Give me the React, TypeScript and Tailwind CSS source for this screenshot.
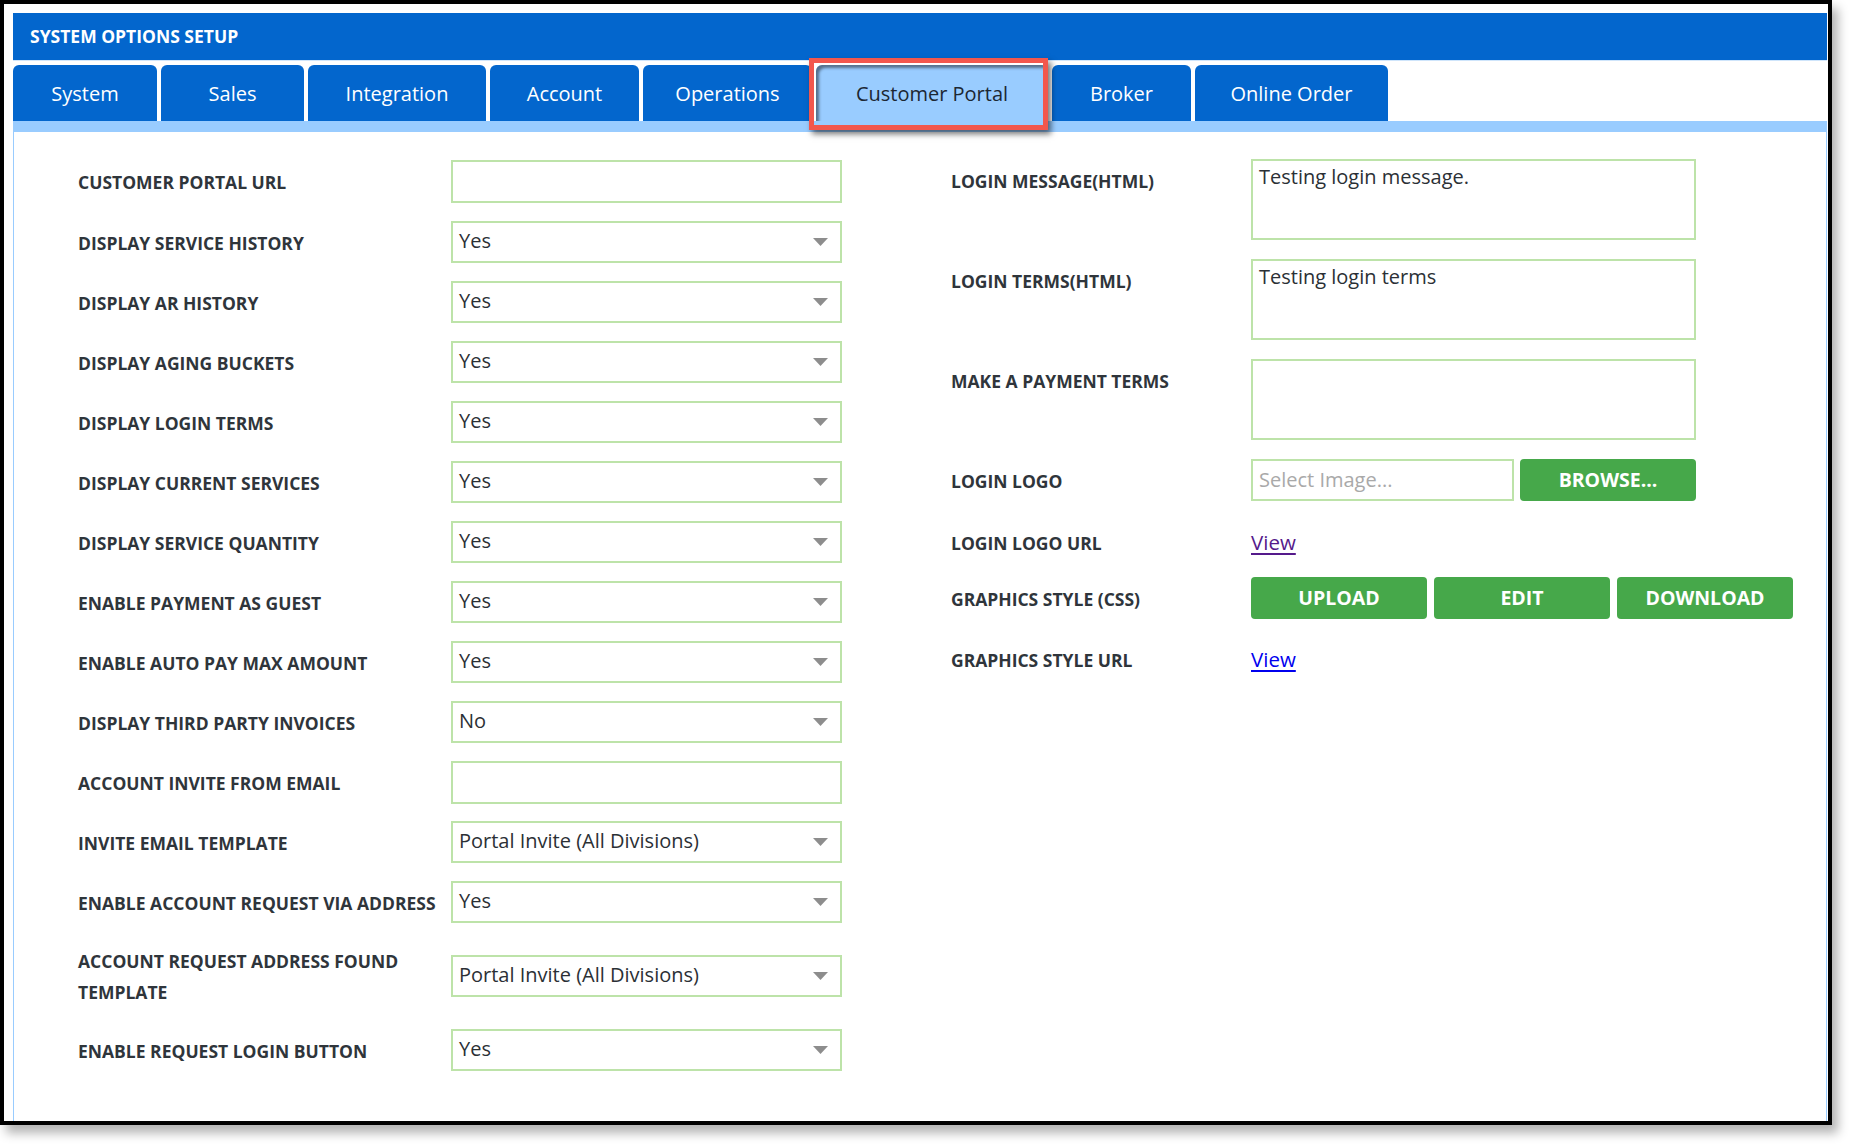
import React from "react";

const font = { fontFamily: '"Open Sans", "Noto Sans", Arial, sans-serif' };

type Row =
  | { label: React.ReactNode; kind: "input"; h?: number }
  | { label: React.ReactNode; kind: "select"; value: string; h?: number };

const rows: Row[] = [
  { label: "CUSTOMER PORTAL URL", kind: "input", h: 62 },
  { label: "DISPLAY SERVICE HISTORY", kind: "select", value: "Yes" },
  { label: "DISPLAY AR HISTORY", kind: "select", value: "Yes" },
  { label: "DISPLAY AGING BUCKETS", kind: "select", value: "Yes" },
  { label: "DISPLAY LOGIN TERMS", kind: "select", value: "Yes" },
  { label: "DISPLAY CURRENT SERVICES", kind: "select", value: "Yes" },
  { label: "DISPLAY SERVICE QUANTITY", kind: "select", value: "Yes" },
  { label: "ENABLE PAYMENT AS GUEST", kind: "select", value: "Yes" },
  { label: "ENABLE AUTO PAY MAX AMOUNT", kind: "select", value: "Yes" },
  { label: "DISPLAY THIRD PARTY INVOICES", kind: "select", value: "No" },
  { label: "ACCOUNT INVITE FROM EMAIL", kind: "input" },
  { label: "INVITE EMAIL TEMPLATE", kind: "select", value: "Portal Invite (All Divisions)" },
  { label: "ENABLE ACCOUNT REQUEST VIA ADDRESS", kind: "select", value: "Yes" },
  {
    label: (
      <>
        ACCOUNT REQUEST ADDRESS FOUND
        <br />
        TEMPLATE
      </>
    ),
    kind: "select",
    value: "Portal Invite (All Divisions)",
    h: 88,
  },
  { label: "ENABLE REQUEST LOGIN BUTTON", kind: "select", value: "Yes" },
];

function Arrow() {
  return (
    <svg width="15" height="8" viewBox="0 0 15 8" className="shrink-0">
      <polygon points="0,0 15,0 7.5,8" fill="#8d8d8d" />
    </svg>
  );
}

function Label({ children }: { children: React.ReactNode }) {
  return (
    <div className="w-[373px] shrink-0 whitespace-nowrap pt-[2px] text-[17.5px] font-bold leading-[31px] text-[#2f353b]">
      {children}
    </div>
  );
}

function GreenBtn({ children, w }: { children: React.ReactNode; w: string }) {
  return (
    <div
      className={`${w} flex h-[42px] items-center justify-center rounded-[4px] bg-[#46a84a] text-[19.5px] font-bold text-white`}
    >
      {children}
    </div>
  );
}

const tabs = [
  { name: "System", w: "w-[144px]" },
  { name: "Sales", w: "w-[143px]" },
  { name: "Integration", w: "w-[178px]" },
  { name: "Account", w: "w-[149px]" },
  { name: "Operations", w: "w-[169px]" },
  { name: "Customer Portal", w: "w-[232px]", active: true },
  { name: "Broker", w: "w-[139px]" },
  { name: "Online Order", w: "w-[193px]" },
];

const rightLabel = "w-[300px] shrink-0 whitespace-nowrap pt-[2px] text-[17.5px] font-bold text-[#2f353b]";

export default function App() {
  return (
    <div className="h-[1144px] w-[1850px] overflow-hidden bg-white" style={font}>
      <div className="h-[1125px] w-[1832px] border-4 border-black bg-white shadow-[6px_8px_10px_rgba(0,0,0,0.3)]">
        <div className="flex h-full flex-col pl-[9px] pr-[1px] pt-[9px]">
          {/* Header */}
          <div className="flex h-[47px] shrink-0 items-center bg-[#0366cd] pl-[17px] text-[17.5px] font-bold text-white">
            SYSTEM OPTIONS SETUP
          </div>
          <div className="h-[5px] shrink-0 border-t border-[#cfe5fb] bg-white" />
          {/* Tabs */}
          <div className="relative flex h-[56px] shrink-0 gap-[4px]">
            {tabs.map((t) =>
              t.active ? (
                <div
                  key={t.name}
                  className={`${t.w} relative flex items-center justify-center rounded-t-[6px] bg-[#99ccff] pt-[2px] text-[20px] text-[#1c2733] shadow-[inset_3px_3px_3px_rgba(0,0,0,0.45)]`}
                >
                  {t.name}
                  <div className="pointer-events-none absolute left-[-7px] top-[-7px] h-[72px] w-[239px] border-[5px] border-[#f2574d] shadow-[3px_4px_6px_rgba(0,0,0,0.55)]" />
                </div>
              ) : (
                <div
                  key={t.name}
                  className={`${t.w} flex items-center justify-center rounded-t-[6px] bg-[#0366cd] pt-[2px] text-[20px] text-white`}
                >
                  {t.name}
                </div>
              )
            )}
          </div>
          <div className="h-[11px] shrink-0 bg-[#99ccff]" />
          {/* Content */}
          <div className="flex flex-1 border-x border-[#99ccff] pl-[64px]">
            {/* Left column */}
            <div className="flex w-[764px] shrink-0 flex-col pt-[18px]">
              {rows.map((r, i) => (
                <div
                  key={i}
                  className={`flex items-center ${r.h === 62 ? "h-[62px]" : r.h === 88 ? "h-[88px]" : "h-[60px]"}`}
                >
                  <Label>{r.label}</Label>
                  {r.kind === "input" ? (
                    <div className="h-[43px] w-[391px] border-2 border-[#bde3a9] bg-white" />
                  ) : (
                    <div className="flex h-[42px] w-[391px] items-center justify-between border-2 border-[#bde3a9] bg-white pl-[6px] pr-[12px] text-[20px] text-[#2b3035]">
                      <span className="-mt-[2px]">{r.value}</span>
                      <Arrow />
                    </div>
                  )}
                </div>
              ))}
            </div>
            {/* Right column */}
            <div className="ml-[109px] flex flex-col pt-[27px]">
              {[
                { l: "LOGIN MESSAGE(HTML)", v: "Testing login message." },
                { l: "LOGIN TERMS(HTML)", v: "Testing login terms" },
                { l: "MAKE A PAYMENT TERMS", v: "" },
              ].map((r, i) => (
                <div key={i} className={`flex items-start ${i > 0 ? "mt-[19px]" : ""}`}>
                  <div className={`flex h-[42px] items-center ${rightLabel}`}>{r.l}</div>
                  <div className="h-[81px] w-[445px] border-2 border-[#bde3a9] bg-white pl-[6px] pt-[1px] text-[20px] leading-[30px] text-[#2b3035]">
                    {r.v}
                  </div>
                </div>
              ))}
              <div className="mt-[19px] flex items-center">
                <div className={`flex h-[42px] items-center ${rightLabel}`}>LOGIN LOGO</div>
                <div className="flex h-[42px] w-[263px] items-center border-2 border-[#bde3a9] bg-white pl-[6px] text-[20px] text-[#a9a9a9]">
                  Select Image...
                </div>
                <div className="ml-[6px]">
                  <GreenBtn w="w-[176px]">BROWSE...</GreenBtn>
                </div>
              </div>
              <div className="mt-[20px] flex h-[42px] items-center">
                <div className={rightLabel}>LOGIN LOGO URL</div>
                <span className="text-[20.5px] text-[#551a8b] underline underline-offset-[3px]">View</span>
              </div>
              <div className="mt-[14px] flex h-[42px] items-center">
                <div className={rightLabel}>GRAPHICS STYLE (CSS)</div>
                <div className="flex gap-[7px]">
                  <GreenBtn w="w-[176px]">UPLOAD</GreenBtn>
                  <GreenBtn w="w-[176px]">EDIT</GreenBtn>
                  <GreenBtn w="w-[176px]">DOWNLOAD</GreenBtn>
                </div>
              </div>
              <div className="mt-[19px] flex h-[42px] items-center">
                <div className={rightLabel}>GRAPHICS STYLE URL</div>
                <span className="text-[20.5px] text-[#0000ee] underline underline-offset-[3px]">View</span>
              </div>
            </div>
          </div>
        </div>
      </div>
    </div>
  );
}
